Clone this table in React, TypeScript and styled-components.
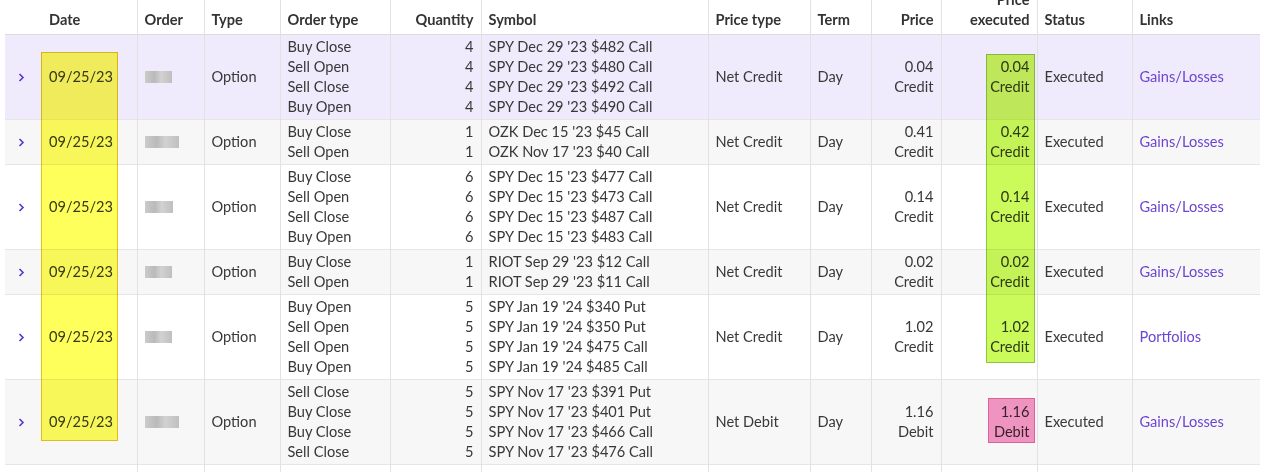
import React from "react";
import styled, { createGlobalStyle } from "styled-components";

const GlobalStyle = createGlobalStyle`
  html, body {
    margin: 0;
    padding: 0;
    background: #ffffff;
    overflow: hidden;
  }

  body {
    font-family: "Lato", "Liberation Sans", sans-serif;
    font-size: 14.6px;
    color: #383838;
  }
`;

const Wrapper = styled.section`
  position: relative;
  width: 1255px;
  margin: -10px 0 0 5px;
`;

const Table = styled.table`
  width: 100%;
  border-collapse: collapse;
  table-layout: fixed;
  line-height: 20px;
`;

const HeadCell = styled.th<{ $align?: "left" | "right"; $first?: boolean }>`
  font-weight: 700;
  color: #333333;
  text-align: ${(p) => p.$align ?? "left"};
  vertical-align: bottom;
  padding: 0 7px 4px;
  border-bottom: 1px solid #dcdcdc;
  border-left: ${(p) => (p.$first ? "none" : "1px solid #e2e2e2")};
`;

const Row = styled.tr<{ $tone: "selected" | "gray" | "white" }>`
  background: ${(p) =>
    p.$tone === "selected" ? "#efebfc" : p.$tone === "gray" ? "#f7f7f7" : "#ffffff"};
  border-bottom: 1px solid #e6e6e6;
`;

const Cell = styled.td<{ $align?: "left" | "right"; $first?: boolean }>`
  text-align: ${(p) => p.$align ?? "left"};
  vertical-align: middle;
  padding: 2px 7px 2px;
  border-left: ${(p) => (p.$first ? "none" : "1px solid #e2e2e2")};
  white-space: nowrap;
`;

const EmptyCell = styled.td<{ $first?: boolean }>`
  height: 40px;
  border-left: ${(p) => (p.$first ? "none" : "1px solid #e2e2e2")};
`;

const Line = styled.div``;

const Link = styled.a`
  color: #6d45d2;
  text-decoration: none;
`;

const Chevron = styled.svg`
  display: block;
  margin-left: 6px;
`;

const Redacted = styled.div<{ $w: number }>`
  width: ${(p) => p.$w}px;
  height: 12px;
  background: linear-gradient(90deg, #cbcbcb 0%, #bababa 35%, #d2d2d2 60%, #bfbfbf 100%);
  filter: blur(0.7px);
`;

const Marker = styled.div<{ $kind: "yellow" | "green" | "pink" }>`
  position: absolute;
  pointer-events: none;
  mix-blend-mode: multiply;
  box-sizing: border-box;
  background: ${(p) =>
    p.$kind === "yellow" ? "#ffff5c" : p.$kind === "green" ? "#cbfb5a" : "#f799c6"};
  border: 1px solid
    ${(p) => (p.$kind === "yellow" ? "#e9c21a" : p.$kind === "green" ? "#8fc640" : "#e2649f")};
`;

type Leg = [string, number, string];

interface Order {
  legs: Leg[];
  priceType: string;
  price: string;
  side: string;
  executed: string;
  link: string;
  idWidth: number;
}

const orders: Order[] = [
  {
    legs: [
      ["Buy Close", 4, "SPY Dec 29 '23 $482 Call"],
      ["Sell Open", 4, "SPY Dec 29 '23 $480 Call"],
      ["Sell Close", 4, "SPY Dec 29 '23 $492 Call"],
      ["Buy Open", 4, "SPY Dec 29 '23 $490 Call"],
    ],
    priceType: "Net Credit",
    price: "0.04",
    side: "Credit",
    executed: "0.04",
    link: "Gains/Losses",
    idWidth: 27,
  },
  {
    legs: [
      ["Buy Close", 1, "OZK Dec 15 '23 $45 Call"],
      ["Sell Open", 1, "OZK Nov 17 '23 $40 Call"],
    ],
    priceType: "Net Credit",
    price: "0.41",
    side: "Credit",
    executed: "0.42",
    link: "Gains/Losses",
    idWidth: 34,
  },
  {
    legs: [
      ["Buy Close", 6, "SPY Dec 15 '23 $477 Call"],
      ["Sell Open", 6, "SPY Dec 15 '23 $473 Call"],
      ["Sell Close", 6, "SPY Dec 15 '23 $487 Call"],
      ["Buy Open", 6, "SPY Dec 15 '23 $483 Call"],
    ],
    priceType: "Net Credit",
    price: "0.14",
    side: "Credit",
    executed: "0.14",
    link: "Gains/Losses",
    idWidth: 28,
  },
  {
    legs: [
      ["Buy Close", 1, "RIOT Sep 29 '23 $12 Call"],
      ["Sell Open", 1, "RIOT Sep 29 '23 $11 Call"],
    ],
    priceType: "Net Credit",
    price: "0.02",
    side: "Credit",
    executed: "0.02",
    link: "Gains/Losses",
    idWidth: 27,
  },
  {
    legs: [
      ["Buy Open", 5, "SPY Jan 19 '24 $340 Put"],
      ["Sell Open", 5, "SPY Jan 19 '24 $350 Put"],
      ["Sell Open", 5, "SPY Jan 19 '24 $475 Call"],
      ["Buy Open", 5, "SPY Jan 19 '24 $485 Call"],
    ],
    priceType: "Net Credit",
    price: "1.02",
    side: "Credit",
    executed: "1.02",
    link: "Portfolios",
    idWidth: 27,
  },
  {
    legs: [
      ["Sell Close", 5, "SPY Nov 17 '23 $391 Put"],
      ["Buy Close", 5, "SPY Nov 17 '23 $401 Put"],
      ["Buy Close", 5, "SPY Nov 17 '23 $466 Call"],
      ["Sell Close", 5, "SPY Nov 17 '23 $476 Call"],
    ],
    priceType: "Net Debit",
    price: "1.16",
    side: "Debit",
    executed: "1.16",
    link: "Gains/Losses",
    idWidth: 34,
  },
];

const widths = [36, 96, 67, 76, 110, 91, 227, 102, 61, 70, 96, 95, 128];

const tones: Array<"selected" | "gray" | "white"> = ["selected", "gray", "white", "gray", "white", "gray"];

const OrdersTable: React.FC = () => {
  return (
    <Table>
      <colgroup>
        {widths.map((w, i) => (
          <col key={i} style={{ width: w }} />
        ))}
      </colgroup>
      <thead>
        <tr>
          <HeadCell $first />
          <HeadCell $first style={{ paddingLeft: 8 }}>Date</HeadCell>
          <HeadCell>Order</HeadCell>
          <HeadCell>Type</HeadCell>
          <HeadCell>Order type</HeadCell>
          <HeadCell $align="right">Quantity</HeadCell>
          <HeadCell>Symbol</HeadCell>
          <HeadCell>Price type</HeadCell>
          <HeadCell>Term</HeadCell>
          <HeadCell $align="right">Price</HeadCell>
          <HeadCell $align="right">
            Price
            <br />
            executed
          </HeadCell>
          <HeadCell>Status</HeadCell>
          <HeadCell>Links</HeadCell>
        </tr>
      </thead>
      <tbody>
        {orders.map((o, i) => (
          <Row key={i} $tone={tones[i]}>
            <Cell $first>
              <Chevron width="7" height="9" viewBox="0 0 7 9">
                <path d="M1.5 1 L5 4.5 L1.5 8" fill="none" stroke="#5a36c6" strokeWidth="1.6" />
              </Chevron>
            </Cell>
            <Cell $first style={{ paddingLeft: 8 }}>09/25/23</Cell>
            <Cell>
              <Redacted $w={o.idWidth} />
            </Cell>
            <Cell>Option</Cell>
            <Cell>
              {o.legs.map((l, j) => (
                <Line key={j}>{l[0]}</Line>
              ))}
            </Cell>
            <Cell $align="right">
              {o.legs.map((l, j) => (
                <Line key={j}>{l[1]}</Line>
              ))}
            </Cell>
            <Cell>
              {o.legs.map((l, j) => (
                <Line key={j}>{l[2]}</Line>
              ))}
            </Cell>
            <Cell>{o.priceType}</Cell>
            <Cell>Day</Cell>
            <Cell $align="right">
              <Line>{o.price}</Line>
              <Line>{o.side}</Line>
            </Cell>
            <Cell $align="right">
              <Line>{o.executed}</Line>
              <Line>{o.side}</Line>
            </Cell>
            <Cell>Executed</Cell>
            <Cell>
              <Link href="#">{o.link}</Link>
            </Cell>
          </Row>
        ))}
        <tr>
          {widths.map((_, i) => (
            <EmptyCell key={i} $first={i < 2} />
          ))}
        </tr>
      </tbody>
    </Table>
  );
};

const App: React.FC = () => {
  return (
    <React.Fragment>
      <GlobalStyle />
      <Wrapper>
        <OrdersTable />
        <Marker $kind="yellow" style={{ left: 36, top: 62, width: 77, height: 389 }} />
        <Marker $kind="green" style={{ left: 981, top: 64, width: 49, height: 309 }} />
        <Marker $kind="pink" style={{ left: 983, top: 408, width: 47, height: 45 }} />
      </Wrapper>
    </React.Fragment>
  );
};

export default App;
